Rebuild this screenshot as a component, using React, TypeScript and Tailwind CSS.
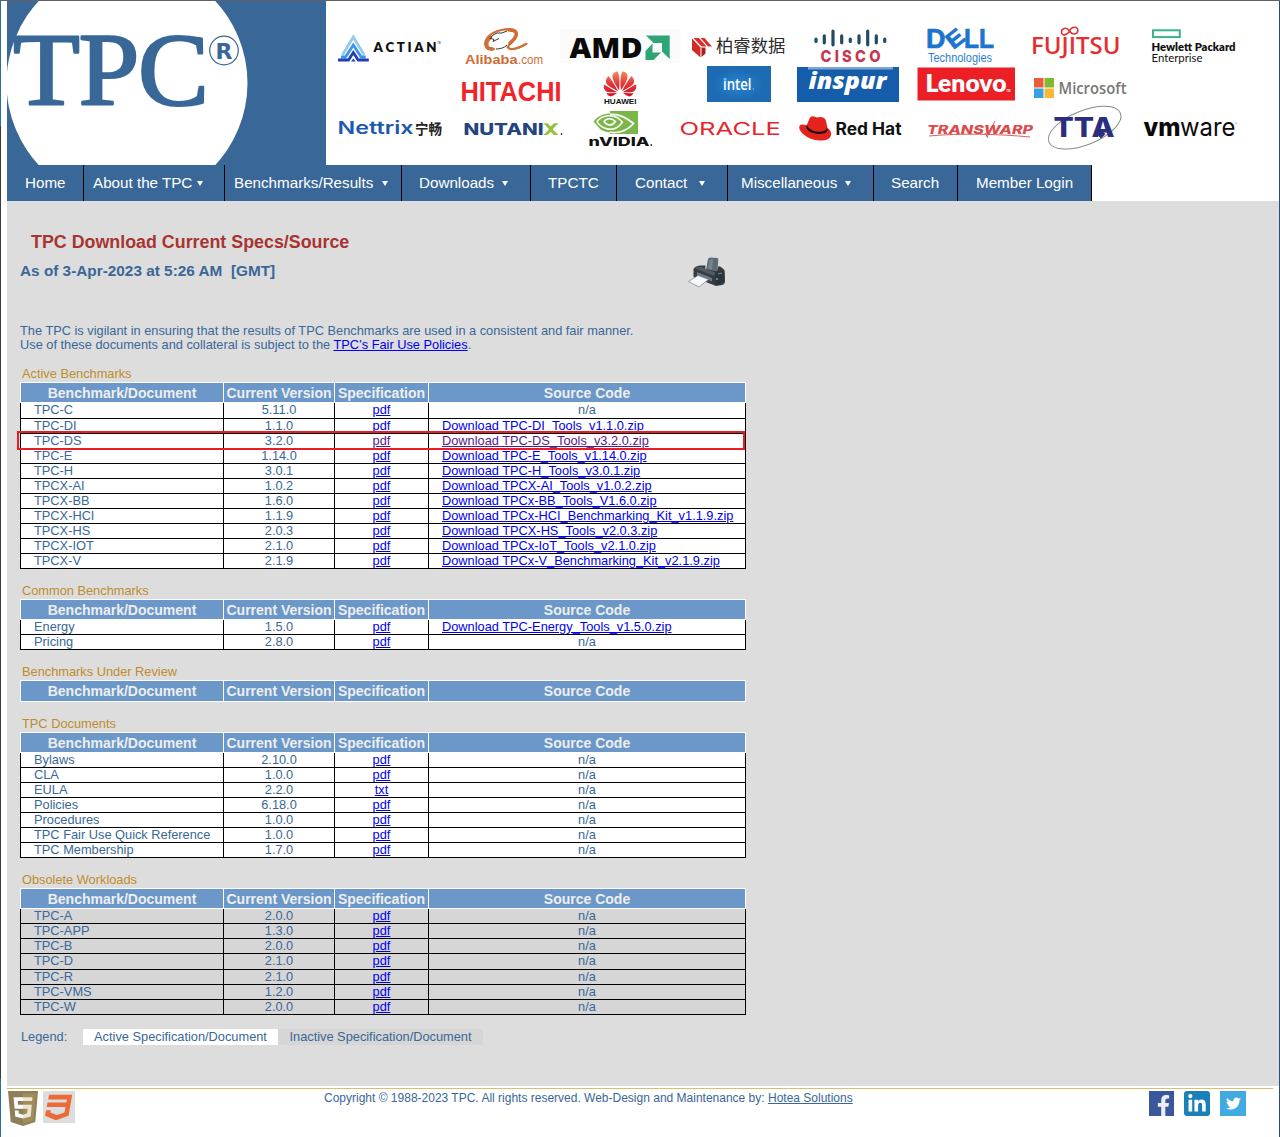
import React from "react";
import { FaCss3, FaFacebookF, FaHtml5, FaLinkedinIn, FaTwitter } from "react-icons/fa";
import { SiHuawei } from "react-icons/si";

type Row = { name: string; version: string; spec?: string; source?: string; size?: string; visited?: boolean };
type Section = { title: string; rows: Row[]; inactive?: boolean };

const TALL = "h-4";

const sections: Section[] = [
  {
    title: "Active Benchmarks",
    rows: [
      { name: "TPC-C", version: "5.11.0", size: TALL },
      { name: "TPC-DI", version: "1.1.0", source: "Download TPC-DI_Tools_v1.1.0.zip" },
      { name: "TPC-DS", version: "3.2.0", source: "Download TPC-DS_Tools_v3.2.0.zip", visited: true },
      { name: "TPC-E", version: "1.14.0", source: "Download TPC-E_Tools_v1.14.0.zip" },
      { name: "TPC-H", version: "3.0.1", source: "Download TPC-H_Tools_v3.0.1.zip" },
      { name: "TPCX-AI", version: "1.0.2", source: "Download TPCX-AI_Tools_v1.0.2.zip" },
      { name: "TPCX-BB", version: "1.6.0", source: "Download TPCx-BB_Tools_V1.6.0.zip" },
      { name: "TPCX-HCI", version: "1.1.9", source: "Download TPCx-HCI_Benchmarking_Kit_v1.1.9.zip" },
      { name: "TPCX-HS", version: "2.0.3", source: "Download TPCX-HS_Tools_v2.0.3.zip" },
      { name: "TPCX-IOT", version: "2.1.0", source: "Download TPCx-IoT_Tools_v2.1.0.zip" },
      { name: "TPCX-V", version: "2.1.9", source: "Download TPCx-V_Benchmarking_Kit_v2.1.9.zip" },
    ],
  },
  {
    title: "Common Benchmarks",
    rows: [
      { name: "Energy", version: "1.5.0", source: "Download TPC-Energy_Tools_v1.5.0.zip" },
      { name: "Pricing", version: "2.8.0" },
    ],
  },
  { title: "Benchmarks Under Review", rows: [] },
  {
    title: "TPC Documents",
    rows: [
      { name: "Bylaws", version: "2.10.0" },
      { name: "CLA", version: "1.0.0" },
      { name: "EULA", version: "2.2.0", spec: "txt" },
      { name: "Policies", version: "6.18.0" },
      { name: "Procedures", version: "1.0.0" },
      { name: "TPC Fair Use Quick Reference", version: "1.0.0" },
      { name: "TPC Membership", version: "1.7.0" },
    ],
  },
  {
    title: "Obsolete Workloads",
    inactive: true,
    rows: [
      { name: "TPC-A", version: "2.0.0" },
      { name: "TPC-APP", version: "1.3.0" },
      { name: "TPC-B", version: "2.0.0" },
      { name: "TPC-D", version: "2.1.0", size: TALL },
      { name: "TPC-R", version: "2.1.0" },
      { name: "TPC-VMS", version: "1.2.0" },
      { name: "TPC-W", version: "2.0.0" },
    ],
  },
];

const navItems = [
  { label: "Home", box: "w-[77px] pl-[18px]" },
  { label: "About the TPC", box: "w-[141px] pl-[9px] pr-[21px]", menu: true },
  { label: "Benchmarks/Results", box: "w-[177px] pl-[9px] pr-[13px]", menu: true },
  { label: "Downloads", box: "w-[129px] pl-[17px] pr-[22px]", menu: true },
  { label: "TPCTC", box: "w-[86px] pl-[17px]" },
  { label: "Contact", box: "w-[111px] pl-[18px] pr-[22px]", menu: true },
  { label: "Miscellaneous", box: "w-[146px] pl-[13px] pr-[22px]", menu: true },
  { label: "Search", box: "w-[84px] pl-[17px]" },
  { label: "Member Login", box: "w-[134px] pl-[18px]" },
];

const COLS = "grid grid-cols-[203px_111px_94px_318px]";

type WordProps = {
  x: number;
  y: number;
  w: number;
  size: number;
  fill: string;
  children: string;
  font?: string;
  weight?: number;
  italic?: boolean;
};

/* A word stretched to an exact width, used for the sponsor word marks. */
function Word({ x, y, w, size, fill, children, font = "Open Sans", weight = 700, italic }: WordProps) {
  return (
    <text
      x={x}
      y={y}
      textLength={w}
      lengthAdjust="spacingAndGlyphs"
      fontSize={size}
      fontFamily={`"${font}", "Noto Sans CJK SC", sans-serif`}
      fontWeight={weight}
      fontStyle={italic ? "italic" : "normal"}
      fill={fill}
    >
      {children}
    </text>
  );
}

function TpcLogo() {
  return (
    <svg width="319" height="164" viewBox="7 1 319 164" className="block shrink-0 bg-[#396797]">
      <circle cx="127" cy="83" r="120.5" fill="#fff" />
      <g fontFamily='"Liberation Serif", serif' fontSize="103" fill="#396797" stroke="#396797" strokeWidth="2.2" strokeLinejoin="round">
        <text x="13" y="104.800" textLength="67" lengthAdjust="spacingAndGlyphs">T</text>
        <text x="78.500" y="104.800" textLength="61" lengthAdjust="spacingAndGlyphs">P</text>
        <text x="138" y="104.800" textLength="71" lengthAdjust="spacingAndGlyphs">C</text>
      </g>
      <circle cx="224" cy="50.500" r="14.300" fill="none" stroke="#396797" strokeWidth="1.200" />
      <text x="215.500" y="58.500" fontFamily='"DejaVu Sans", sans-serif' fontWeight="700" fontSize="22" fill="#396797">R</text>
    </svg>
  );
}

const ciscoBars = [
  [816, 37.7, 43], [824.3, 34.3, 44.3], [833, 29.5, 46.3], [841.7, 34.3, 44.3], [850.3, 37.7, 43],
  [859, 34.3, 44.3], [867.7, 29.5, 46.3], [876.3, 34.3, 44.3], [884.7, 37.7, 43],
];

function SponsorBanner() {
  return (
    <svg width="952" height="164" viewBox="326 1 952 164" className="block">
      <defs>
        <linearGradient id="petal" x1="0" y1="0" x2="0" y2="1">
          <stop offset="0" stopColor="#f08a5c" />
          <stop offset="0.500" stopColor="#e3353a" />
          <stop offset="1" stopColor="#cf1526" />
        </linearGradient>
        <radialGradient id="glow">
          <stop offset="0" stopColor="#2a86d0" />
          <stop offset="1" stopColor="#1c6bb3" />
        </radialGradient>
      </defs>

      {/* Actian */}
      <g fill="none" strokeWidth="2.800">
        <path d="M342.500 55 L353.300 37 L364.200 55" stroke="#93cbee" />
        <path d="M341 57 h4.500 L353.300 45 L361.200 57 h4.500" stroke="#3f93ea" />
        <path d="M338 60 h10.500 L353.300 52.500 L358.200 60 h10.600" stroke="#1f3fb5" />
      </g>
      <path d="M351 61.500 l2.300 -3 l2.300 3z" fill="#1f3fb5" />
      <Word x={373.5} y={51.5} w={63} size={13.5} fill="#111" font="Lato" weight={800}>A C T I A N</Word>
      <Word x={437.500} y={44} w={3} size={3} fill="#555">TM</Word>

      {/* Alibaba */}
      <g fill="none" stroke="#cf6f35" strokeLinecap="round">
        <path d="M494 49 C484 50 483 42 489 36 C495 30 508 28 514 30 C520 33 515 40 509 45 C506 49 511 50 517 48 C521 47 524 45 526 44" strokeWidth="2.200" />
        <path d="M492 49 C485 49 485 42 490 37" strokeWidth="4" />
        <path d="M509 30 C520 30 517 37 510 43" strokeWidth="3.500" />
        <path d="M507 47 C512 51 520 48 527 43.500" strokeWidth="1.500" />
      </g>
      <path d="M490 39 l3 -4 l4 -2 l5 0 l5 -2 M491 38.500 l3 1 l-1 2 l6 -3 M496 49 c4 0 8 -1 11 -4" fill="none" stroke="#222" strokeWidth="0.900" />
      <Word x={465} y={63.5} w={52.500} size={13} fill="#cf6c36" font="Liberation Sans">Alibaba</Word>
      <Word x={518} y={63.500} w={25} size={13} fill="#cf6c36" font="Liberation Sans" weight={400}>.com</Word>

      {/* AMD */}
      <rect x="560" y="29" width="120.500" height="34" fill="#fbfbfb" />
      <Word x={569.5} y={58.3} w={73} size={28.8} fill="#0a0a0a" weight={800}>AMD</Word>
      <path d="M646 35.500 H669.700 V59 L662 51.500 V43 H653.500 Z" fill="#2ea574" />
      <path d="M652.500 43.500 V52.500 H661 L653.500 60 H645.500 V51 Z" fill="#2ea574" />

      {/* 柏睿数据 */}
      <path d="M692 38.500 L700.500 47.500 V57.500 L692 50 Z" fill="#d22a27" />
      <path d="M693.500 38 H699 L706.500 46.500 H701.500 Z" fill="#d9302c" />
      <path d="M700.500 38 H704.500 L712 46.500 H708 Z" fill="#d9302c" />
      <path d="M701.500 47.500 H705.500 V53.500 L701.500 57 Z" fill="#a91f1f" />
      <Word x={716} y={52} w={69.500} size={17} fill="#2b2b2b" font="Noto Sans CJK SC" weight={400}>柏睿数据</Word>

      {/* Cisco */}
      {ciscoBars.map(([x, top, bottom]) => (
        <line key={x} x1={x} x2={x} y1={top + 1.5} y2={bottom - 1.5} stroke="#1f4d63" strokeWidth="3.200" strokeLinecap="round" />
      ))}
      <Word x={820.500} y={62} w={60} size={16.200} fill="#c8354f" font="Inter" weight={800}>C I S C O</Word>

      {/* Dell */}
      <g fontFamily='"Liberation Sans", sans-serif' fontWeight="700" fill="#1b75cf" stroke="#1b75cf" strokeWidth="0.700">
        <text x="926" y="47.800" fontSize="27.500" textLength="19.500" lengthAdjust="spacingAndGlyphs">D</text>
        <text x="-8.500" y="8" fontSize="23" textLength="17" lengthAdjust="spacingAndGlyphs" transform="translate(955 38.500) rotate(-38)">E</text>
        <text x="964" y="47.800" fontSize="27.500" textLength="30" lengthAdjust="spacingAndGlyphs">LL</text>
      </g>
      <Word x={928} y={61.5} w={64} size={12.500} fill="#2b7fd0" font="Liberation Sans" weight={400}>Technologies</Word>

      {/* Fujitsu */}
      <Word x={1031} y={54.3} w={89.500} size={23} fill="#e32f31" weight={600}>FUJITSU</Word>
      <path d="M1069.500 31 C1066 26 1061.500 29 1061.500 32 C1061.500 36 1067 36 1069.500 31 C1071.500 26 1078 26 1077.800 30.500 C1077.500 35 1072 35 1069.500 31" fill="none" stroke="#e32f31" strokeWidth="1.600" />

      {/* Hewlett Packard Enterprise */}
      <rect x="1153" y="30.300" width="26.800" height="6.800" fill="none" stroke="#3ab28a" strokeWidth="2" />
      <Word x={1151.5} y={51} w={84} size={11.500} fill="#111" font="Lato" weight={800}>Hewlett Packard</Word>
      <Word x={1151.5} y={61.800} w={51} size={11.500} fill="#111" font="Lato" weight={400}>Enterprise</Word>

      {/* Hitachi */}
      <Word x={460.500} y={100.500} w={101} size={28} fill="#f32428" font="Liberation Sans">HITACHI</Word>

      {/* Huawei */}
      <SiHuawei x={603.5} y={67.500} size={33} fill="url(#petal)" />
      <Word x={604} y={103.600} w={32.500} size={7} fill="#111" font="Liberation Sans">HUAWEI</Word>

      {/* Intel */}
      <rect x="707" y="66" width="64" height="36" fill="#1c6bb3" />
      <ellipse cx="738" cy="85" rx="26" ry="15" fill="url(#glow)" />
      <Word x={723} y={89.800} w={28.500} size={15.500} fill="#fff" weight={600}>intel</Word>
      <rect x="723.800" y="78" width="2.600" height="2.600" fill="#5fc4f5" />
      <circle cx="753.200" cy="89" r="0.700" fill="#8cc8f5" />

      {/* Inspur */}
      <rect x="797" y="67" width="102" height="35" fill="#155cab" />
      <rect x="808" y="67" width="85" height="2.500" fill="#7ea6d3" />
      <Word x={808.5} y={88.800} w={78} size={22} fill="#fff" weight={800} italic>inspur</Word>

      {/* Lenovo */}
      <rect x="917.500" y="67.500" width="97.500" height="33" fill="#ec1f27" />
      <Word x={925.500} y={92} w={81} size={23.500} fill="#fff" font="Lato" weight={800}>Lenovo</Word>
      <Word x={1006.500} y={92} w={4} size={3} fill="#fff">TM</Word>

      {/* Microsoft */}
      <rect x="1034" y="78" width="9.500" height="9.500" fill="#ee5b38" />
      <rect x="1044.500" y="78" width="9.500" height="9.500" fill="#85b82f" />
      <rect x="1034" y="88.500" width="9.500" height="9.500" fill="#38a1e4" />
      <rect x="1044.500" y="88.500" width="9.500" height="9.500" fill="#f8b934" />
      <Word x={1058.500} y={94} w={68} size={17} fill="#777" weight={600}>Microsoft</Word>

      {/* Nettrix */}
      <Word x={337.500} y={134} w={76} size={17.500} fill="#1b5ab0" font="Inter" weight={600}>Nettrix</Word>
      <Word x={415} y={134} w={27} size={14} fill="#222" font="Noto Sans CJK SC" weight={700}>宁畅</Word>

      {/* Nutanix */}
      <Word x={463.500} y={134.800} w={80} size={16} fill="#24447f" font="Inter" weight={800}>NUTANI</Word>
      <path d="M543.500 123.300 h4 l6 6 l-6 5.700 h-4 l5.500 -5.700z" fill="#94c23f" />
      <path d="M550.500 126.500 l3.500 -3.200 h4.500 l-6 5.900 l6 5.800 h-4.500 l-5.500 -5.200z" fill="#94c23f" />
      <circle cx="561.500" cy="134" r="0.900" fill="#24447f" />

      {/* Nvidia */}
      <path d="M610 111 h28 v23 h-28z" fill="#7ab648" />
      <path d="M593.500 121.500 C600 112 616 111 624 118 L629 123 C623 131 610 136 600 129 Z" fill="#7ab648" />
      <path d="M610 114.500 C620 113.500 628 119 633.500 123.500 C626 132 616 133.500 610 132" fill="none" stroke="#fff" strokeWidth="1.800" />
      <path d="M597 121.500 C603 114.500 612 114.500 618 118 L622.500 122 C618 128.500 612 130.500 606 128.500 C601 127 598.500 124.500 597 121.500 Z" fill="none" stroke="#fff" strokeWidth="1.500" />
      <path d="M604 121.500 C607 117.500 612 118 615.500 121.500 C612 126.500 607 126 604 121.500 Z" fill="#7ab648" stroke="#fff" strokeWidth="1.500" />
      <Word x={588.500} y={146} w={61} size={11.200} fill="#111" font="Inter" weight={800}>nVIDIA</Word>
      <circle cx="651.300" cy="145" r="0.900" fill="#333" />

      {/* Oracle */}
      <Word x={679.500} y={135.200} w={101.500} size={17} fill="#e3262c" font="Inter" weight={400}>ORACLE</Word>

      {/* Red Hat */}
      <path d="M806 127 L809.500 118.500 Q811 115.500 814 116.500 L817 117.500 L820 117 Q825 117 826 121 L827.500 128 Q832 131 831 135.500 Q829 141 820 140.500 Q810 140 803 134 Q798 129 799.500 126 Q801 123.500 806.500 125.500 Z" fill="#e5231d" />
      <path d="M806.800 124.500 C808 130 818 133.500 824 131 Q827 130 826.800 127 L827.600 130.500 Q826 134 819 134 C811 133.500 804.500 130 806.800 124.500 Z" fill="#161010" />
      <Word x={835.500} y={134.800} w={66} size={17} fill="#111" font="Inter" weight={700}>Red Hat</Word>

      {/* Transwarp */}
      <Word x={927} y={133.800} w={106} size={11.500} fill="#dd4a4e" font="Inter" weight={800} italic>TRANSWARP</Word>
      <path d="M987 137 L995 121 M985 133 l3 5 M929 136 C960 133 1000 134 1030 137" stroke="#dd4a4e" strokeWidth="0.900" fill="none" />

      {/* TTA */}
      <ellipse cx="1084.700" cy="127.700" rx="38.500" ry="17" transform="rotate(-22 1084.700 127.700)" fill="none" stroke="#8a8a8a" strokeWidth="1" />
      <Word x={1053.500} y={137} w={61} size={26.500} fill="#2b2d7e" font="Inter" weight={800}>TTA</Word>
      <path d="M1101 130 l4.500 4 -4.500 4.500 -4.500 -4.500z" fill="#2b2d7e" />

      {/* VMware */}
      <Word x={1143.500} y={135.500} w={37} size={24.500} fill="#0a0a0a" font="Inter" weight={800}>vm</Word>
      <Word x={1180} y={135.500} w={55.500} size={24.500} fill="#0a0a0a" font="Inter" weight={400}>ware</Word>
      <circle cx="1236" cy="123" r="0.600" fill="#333" />
    </svg>
  );
}

function Printer() {
  return (
    <svg width="38" height="31" viewBox="0 0 38 31">
      <path d="M18 13 L20 2 Q20.500 0.500 22.500 0.500 L29 1 Q30.500 1.200 30.300 3 L29.500 14 Z" fill="#5c6b74" />
      <path d="M20 12 L21.500 3 L25 2 L24 13 Z" fill="#74838c" />
      <path d="M5.500 12 Q7 9 12 8.500 L17.500 8.500 L17 12 L29 14 L30.500 9 Q36 11 36.800 14.500 L37 24 Q37 27 34 28 L28 29 L5.500 20 Z" fill="#343c43" />
      <path d="M7 11.500 Q9 9.800 13 9.800 L27 15.500 L26.500 19 Z" fill="#4f5a63" />
      <path d="M9 15 L24 21 V24.500 L9 18.500 Z" fill="#6d7780" />
      <path d="M27 17 Q29 14 35 13.500 L36 24 Q33 27 28 28 Z" fill="#2b3238" />
      <path d="M30 17 l4 -1" stroke="#8d9aa3" strokeWidth="0.900" />
      <circle cx="29" cy="22" r="1.100" fill="#6e9bb5" />
      <path d="M0.500 24.500 L10 18.500 L20.500 22.500 L11 30 Z" fill="#f6f8fa" stroke="#7b868e" strokeWidth="0.700" />
    </svg>
  );
}

function BenchmarkTable({ section }: { section: Section }) {
  const fill = section.inactive ? "bg-[#d6d6d6]" : "bg-white";
  const empty = section.rows.length === 0;
  return (
    <section>
      <h2 className="flex h-[30px] items-end pb-px pl-[2px] text-[12.8px] leading-[14px] text-[#bd8c2c]">{section.title}</h2>
      <div className="w-[726px]">
        <div
          className={`${COLS} ${empty ? "h-[22px]" : "h-[21px]"} border-y border-white bg-[#6b98c9] text-center text-[14px] font-bold leading-[20px] text-[#eeeeee]`}
        >
          <div className="border-l border-white">Benchmark/Document</div>
          <div className="whitespace-nowrap border-l border-white">Current Version</div>
          <div className="border-l border-white">Specification</div>
          <div className="border-x border-white">Source Code</div>
        </div>
        {section.rows.map((row) => {
          const link = row.visited ? "text-[#551a8b] underline" : "text-[#0000ee] underline";
          return (
            <div key={row.name} className={`${COLS} ${row.size ?? "h-[15px]"} ${fill} relative border-b border-black text-center leading-[14px]`}>
              <div className="whitespace-nowrap border-l border-black pl-[13px] text-left">{row.name}</div>
              <div className="border-l border-black">{row.version}</div>
              <div className="border-l border-black">
                <a className={link}>{row.spec ?? "pdf"}</a>
              </div>
              {row.source ? (
                <div className="whitespace-nowrap border-x border-black pl-[13px] text-left">
                  <a className={link}>{row.source}</a>
                </div>
              ) : (
                <div className="border-x border-black">n/a</div>
              )}
              {row.visited && <div className="absolute -left-[3px] -top-[3px] z-10 h-[19px] w-[728px] border-2 border-[#ec1c24]" />}
            </div>
          );
        })}
      </div>
    </section>
  );
}

export default function App() {
  return (
    <div className='flex h-[1137px] w-[1280px] flex-col overflow-hidden bg-white font-["Liberation_Sans",Arial,sans-serif] text-[12.8px] text-[#396797]'>
      <div className="h-px shrink-0 bg-[#606065]" />
      <div className="flex flex-1">
        <div className="flex w-px shrink-0 flex-col">
          <div className="h-[125px] bg-[#2d6da3]" />
          <div className="flex-1 bg-[#3c3c40]" />
          <div className="h-[58px] bg-[#2a6f9e]" />
        </div>
        <div className="ml-[6px] flex w-[1272px] flex-col">
          <header className="flex h-[164px] shrink-0">
            <TpcLogo />
            <SponsorBanner />
          </header>

          <nav className="flex h-9 shrink-0 text-[15.2px] leading-[36px] text-white">
            {navItems.map((item) => (
              <a key={item.label} className={`flex items-center justify-between whitespace-nowrap border-r border-black bg-[#396797] ${item.box}`}>
                <span>{item.label}</span>
                {item.menu && (
                  <svg width="6" height="5" viewBox="0 0 6 5" className="mt-px">
                    <path d="M0 0 H6 L3 5 Z" fill="#fff" />
                  </svg>
                )}
              </a>
            ))}
          </nav>

          <main className="h-[885px] shrink-0 bg-[#dddddd] pl-[13px] pt-[31px]">
            <h1 className="pl-[11px] text-[17.85px] font-bold leading-[20px] text-[#a83432]">TPC Download Current Specs/Source</h1>
            <div className="flex h-[72px]">
              <p className="mt-[10px] w-[668px] whitespace-pre text-[15.35px] font-bold leading-[18px]">As of 3-Apr-2023 at 5:26 AM  [GMT]</p>
              <div className="mt-[5px]">
                <Printer />
              </div>
            </div>
            <p className="leading-[14px]">
              The TPC is vigilant in ensuring that the results of TPC Benchmarks are used in a consistent and fair manner.
              <br />
              Use of these documents and collateral is subject to the <a className="text-[#0000ee] underline">TPC’s Fair Use Policies</a>.
            </p>
            {sections.map((section) => (
              <BenchmarkTable key={section.title} section={section} />
            ))}
            <div className="mt-[14px] flex h-4 leading-[16px]">
              <span className="w-[63px] pl-px">Legend:</span>
              <span className="w-[195px] bg-white text-center">Active Specification/Document</span>
              <span className="w-[205px] bg-[#d6d6d6] text-center">Inactive Specification/Document</span>
            </div>
          </main>

          <footer className="mt-[2px] flex w-[1266px] border-t border-[#d9bd72] pt-[2px]">
            <div className="flex w-[317px] gap-[4px]">
              <svg width="32" height="35" viewBox="0 0 32 35">
                <path d="M3 4 H29 L26 29 L16 32 L6 29 Z" fill="#fff" />
                <FaHtml5 x="-4" y="-2.500" size={40} fill="#8f7f58" />
                <path d="M16 2.500 H29 L26.500 29.500 L16 33 Z" fill="#c9ab6a" opacity="0.300" />
              </svg>
              <div className="flex h-8 w-8 items-center justify-center bg-[#dddddd]">
                <FaCss3 size={29} color="#ec6a35" />
              </div>
            </div>
            <p className="w-[825px] whitespace-nowrap text-[12px] leading-[14px]">
              Copyright © 1988-2023 TPC. All rights reserved. Web-Design and Maintenance by: <a className="underline">Hotea Solutions</a>
            </p>
            <div className="flex gap-[10px]">
              <div className="flex h-[25px] w-[25px] items-end justify-end overflow-hidden bg-[#3b579b]">
                <FaFacebookF size={21} color="#eceef5" />
              </div>
              <div className="flex h-[25px] w-[26px] items-center justify-center rounded-[3px] bg-[#1b80b9]">
                <FaLinkedinIn size={20} color="#fff" />
              </div>
              <div className="flex h-[25px] w-[26px] items-center justify-center bg-[#41abe1]">
                <FaTwitter size={15} color="#fff" />
              </div>
            </div>
          </footer>
        </div>
        <div className="w-px shrink-0 bg-[#2d4d80]" />
      </div>
    </div>
  );
}
